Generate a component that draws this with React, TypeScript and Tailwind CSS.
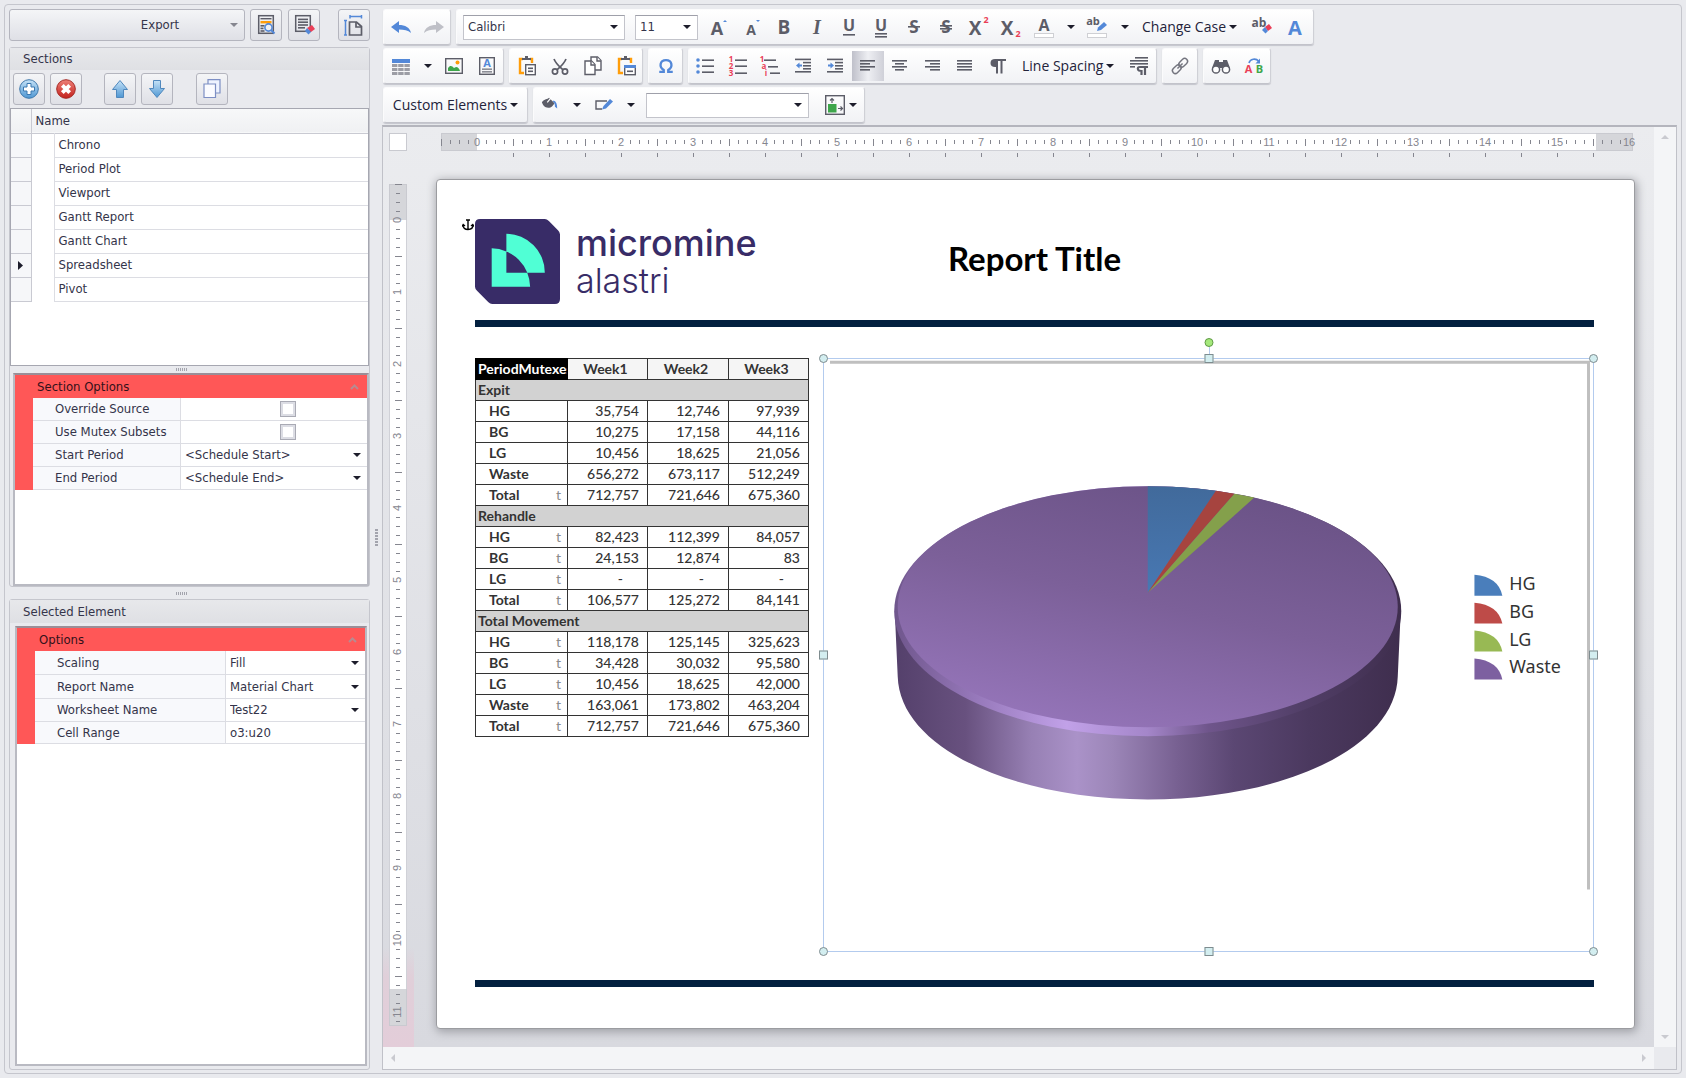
import type { ReactNode } from 'react';

const DARK = '#5c5d68';
const BLUE = '#5388d8';
const RED = '#ea3f58';
const ORANGE = '#ff9d0a';
const GREEN = '#3ea64b';

const sections = ['Chrono', 'Period Plot', 'Viewport', 'Gantt Report', 'Gantt Chart', 'Spreadsheet', 'Pivot'];

type Row = { label: string; unit?: string; values?: string[] };

const reportRows: Row[] = [
    { label: 'Expit' },
    { label: 'HG', values: ['35,754', '12,746', '97,939'] },
    { label: 'BG', values: ['10,275', '17,158', '44,116'] },
    { label: 'LG', values: ['10,456', '18,625', '21,056'] },
    { label: 'Waste', values: ['656,272', '673,117', '512,249'] },
    { label: 'Total', unit: 't', values: ['712,757', '721,646', '675,360'] },
    { label: 'Rehandle' },
    { label: 'HG', unit: 't', values: ['82,423', '112,399', '84,057'] },
    { label: 'BG', unit: 't', values: ['24,153', '12,874', '83'] },
    { label: 'LG', unit: 't', values: ['-', '-', '-'] },
    { label: 'Total', unit: 't', values: ['106,577', '125,272', '84,141'] },
    { label: 'Total Movement' },
    { label: 'HG', unit: 't', values: ['118,178', '125,145', '325,623'] },
    { label: 'BG', unit: 't', values: ['34,428', '30,032', '95,580'] },
    { label: 'LG', unit: 't', values: ['10,456', '18,625', '42,000'] },
    { label: 'Waste', unit: 't', values: ['163,061', '173,802', '463,204'] },
    { label: 'Total', unit: 't', values: ['712,757', '721,646', '675,360'] },
];

function Svg({ children, size = 20 }: { children: ReactNode; size?: number }) {
    return (
        <svg width={size} height={size} viewBox="0 0 20 20" fill="none" className="shrink-0 overflow-visible" aria-hidden="true">
            {children}
        </svg>
    );
}

function Lines({ rows, color = DARK }: { rows: [number, number, number][]; color?: string }) {
    return (
        <>
            {rows.map(([x, y, w], i) => (
                <rect key={i} x={x} y={y} width={w} height="1.6" fill={color} />
            ))}
        </>
    );
}

function Glyph({ x = 10, y = 16, size = 18, color = DARK, bold = true, italic = false, serif = false, children }: any) {
    return (
        <text
            x={x}
            y={y}
            fontSize={size}
            fill={color}
            textAnchor="middle"
            fontWeight={bold ? 700 : 400}
            fontStyle={italic ? 'italic' : 'normal'}
            fontFamily={serif ? 'Liberation Serif, serif' : 'Open Sans, sans-serif'}
        >
            {children}
        </text>
    );
}

function Caret({ className = 'fill-[#1d1d2b]' }: { className?: string }) {
    return (
        <svg width="8" height="4" viewBox="0 0 8 4" className={`shrink-0 ${className}`} aria-hidden="true">
            <path d="M0 0H8L4 4Z" />
        </svg>
    );
}

const icons = {
    undo: <path d="M0 10L8 4V8C14 8 19 10.5 20 16C17 13.2 13 12.5 8 12.5V16Z" fill={BLUE} />,
    redo: <path d="M20 10L12 4V8C6 8 1 10.5 0 16C3 13.2 7 12.5 12 12.5V16Z" fill="#bfc0c7" />,
    grow: <><Glyph x={8} y={18} size={18}>A</Glyph><path d="M14 5L16 3L18 5Z" fill={BLUE} /></>,
    shrink: <><Glyph x={9} y={18} size={14}>A</Glyph><path d="M14 3L16 5L18 3Z" fill={BLUE} /></>,
    bold: <Glyph y={17} size={19}>B</Glyph>,
    italic: <Glyph y={17} size={20} serif italic>I</Glyph>,
    underline: <><Glyph y={14} size={16}>U</Glyph><Lines rows={[[4, 17, 12]]} /></>,
    underline2: <><Glyph y={14} size={16}>U</Glyph><Lines rows={[[4, 16, 12], [4, 19, 12]]} /></>,
    strike: <><Glyph y={16} size={17}>S</Glyph><Lines rows={[[4, 9, 12]]} /></>,
    strike2: <><Glyph y={16} size={17}>S</Glyph><Lines rows={[[4, 8, 12], [4, 11, 12]]} /></>,
    sup: <><Glyph x={6} y={18} size={19}>X</Glyph><Glyph x={17} y={6} size={9} color={RED}>2</Glyph></>,
    sub: <><Glyph x={6} y={18} size={19}>X</Glyph><Glyph x={17} y={20} size={9} color={RED}>2</Glyph></>,
    fontColor: <><Glyph y={14} size={16}>A</Glyph><rect x=".5" y="16.5" width="19" height="4" stroke="#cfd0d4" fill="#fff" /></>,
    highlight: (
        <>
            <Glyph x={6} y={8} size={11}>ab</Glyph>
            <rect x=".5" y="16.5" width="19" height="4" stroke="#cfd0d4" fill="#fff" />
            <path d="M10 14L11 10.5L17 5L20 8L14 13Z" fill={BLUE} />
        </>
    ),
    clearFormat: (
        <>
            <Glyph x={7} y={10} size={12}>ab</Glyph>
            <path d="M13 10L17 7L20 11L16 14Z" fill={RED} />
            <path d="M13 10L16 14L13.5 16.5L10 13Z" fill={BLUE} />
        </>
    ),
    fontDialog: <Glyph y={18} size={20} color={BLUE}>A</Glyph>,
    table: (
        <>
            <rect x="1" y="3" width="18" height="4" fill={BLUE} />
            {[8, 12, 16].map((y) => [1, 7.2, 13.4].map((x) => <rect key={`${x}-${y}`} x={x} y={y} width="5.4" height="3" fill="#9c9da5" />))}
        </>
    ),
    picture: (
        <>
            <rect x="1.7" y="2.7" width="16.6" height="14.6" stroke={DARK} strokeWidth="1.4" />
            <path d="M4 15V12C6 9 8 9.5 10 12L12 11C14 11 15.5 13 16 15Z" fill={GREEN} />
            <circle cx="13.5" cy="6.5" r="2" fill={ORANGE} />
        </>
    ),
    textBox: (
        <>
            <rect x="2.7" y="1.7" width="14.6" height="16.6" stroke={DARK} strokeWidth="1.4" />
            <Glyph y={11} size={11} color={BLUE}>A</Glyph>
            <Lines rows={[[5, 12.4, 10], [5, 15, 10]]} color="#8c8d96" />
        </>
    ),
    paste: (
        <>
            <path d="M6 3H3V17H7M13 3H15V7" stroke={ORANGE} strokeWidth="2.4" />
            <path d="M5 4V2H8V0H11V2H14V4Z" fill={DARK} />
            <rect x="8.7" y="8.7" width="9.6" height="10" stroke={DARK} strokeWidth="1.4" fill="#fff" />
            <Lines rows={[[11, 11.5, 5], [11, 14.5, 5]]} />
        </>
    ),
    pasteSpecial: (
        <>
            <path d="M6 3H3V17H7M13 3H15V7" stroke={ORANGE} strokeWidth="2.4" />
            <path d="M5 4V2H8V0H11V2H14V4Z" fill={DARK} />
            <rect x="8.7" y="9.7" width="10.6" height="9" stroke={DARK} strokeWidth="1.4" fill="#fff" />
            <rect x="8" y="9" width="12" height="3" fill={BLUE} />
            <Lines rows={[[11, 14.5, 6]]} />
        </>
    ),
    cut: (
        <g stroke={DARK} strokeWidth="1.7">
            <path d="M4 3C6 8 10 11 13 14M16 3C14 8 10 11 7 14" />
            <circle cx="5" cy="15.5" r="2.6" />
            <circle cx="15" cy="15.5" r="2.6" />
        </g>
    ),
    copy: (
        <g stroke={DARK} strokeWidth="1.4" fill="#fff">
            <path d="M8 1H14.5L18 4.5V14H8Z" />
            <path d="M14 1V5H18" />
            <path d="M2 5H8.5L12 8.5V18.5H2Z" />
            <path d="M8 5V9H12" />
        </g>
    ),
    omega: <path d="M2.5 16.5H7.5V14.5C2 11 3 3.5 10 3.5S18 11 12.5 14.5V16.5H17.5" stroke={BLUE} strokeWidth="2.6" />,
    bullets: (
        <>
            {[4, 10, 16].map((y) => <circle key={y} cx="3" cy={y} r="1.8" fill={BLUE} />)}
            <Lines rows={[[7, 3.4, 12], [7, 9.4, 12], [7, 15.4, 12]]} />
        </>
    ),
    numbers: (
        <>
            <Glyph x={3} y={6} size={8} color={RED}>1</Glyph>
            <Glyph x={3} y={13} size={8} color={RED}>2</Glyph>
            <Glyph x={3} y={20} size={8} color={RED}>3</Glyph>
            <Lines rows={[[7, 3.4, 12], [7, 9.4, 12], [7, 16.4, 12]]} />
        </>
    ),
    multilevel: (
        <>
            <Glyph x={2} y={6} size={8} color={RED}>1</Glyph>
            <Glyph x={4} y={13} size={8} color={RED}>a</Glyph>
            <Glyph x={6} y={20} size={8} color={RED}>i</Glyph>
            <Lines rows={[[4, 3.4, 12], [8, 10, 10], [10, 16.4, 10]]} />
        </>
    ),
    outdent: (
        <>
            <Lines rows={[[2, 2.6, 16], [10, 5.8, 8], [10, 9, 8], [10, 12, 8], [2, 15, 16]]} />
            <path d="M3 9.5L6.5 6.5V8.5H9V10.5H6.5V12.5Z" fill={BLUE} />
        </>
    ),
    indent: (
        <>
            <Lines rows={[[2, 2.6, 16], [10, 5.8, 8], [10, 9, 8], [10, 12, 8], [2, 15, 16]]} />
            <path d="M9 9.5L5.5 6.5V8.5H3V10.5H5.5V12.5Z" fill={BLUE} />
        </>
    ),
    left: <Lines rows={[[2, 4, 15], [2, 7, 10], [2, 10, 15], [2, 13, 10]]} />,
    center: <Lines rows={[[2, 4, 15], [5, 7, 9], [2, 10, 15], [5, 13, 9]]} />,
    right: <Lines rows={[[2, 4, 15], [7, 7, 10], [2, 10, 15], [7, 13, 10]]} />,
    justify: <Lines rows={[[2, 4, 15], [2, 7, 15], [2, 10, 15], [2, 13, 15]]} />,
    pilcrow: (
        <>
            <path d="M9 3H7C4 3 2.500 4.500 2.500 7C2.500 9.500 4 11 7 11H9Z" fill={DARK} />
            <path d="M18 4H7M9 4V17.500M13.500 4V17.500" stroke={DARK} strokeWidth="2" />
        </>
    ),
    paragraph: (
        <>
            <Lines rows={[[6, 1, 13], [1, 4, 18], [1, 7, 18], [1, 10, 5]]} />
            <path d="M19 11H11C9 11 8.500 12 9 13.500C9.500 15 11 15 12.500 15V19M16 11V19" stroke={DARK} strokeWidth="2.2" />
        </>
    ),
    link: (
        <g stroke="#74757f" strokeWidth="1.6" transform="rotate(-45 10 10)">
            <rect x="-.5" y="6.8" width="11" height="6.4" rx="3.2" />
            <rect x="9.5" y="6.8" width="11" height="6.4" rx="3.2" />
            <path d="M6 10H14" />
        </g>
    ),
    find: (
        <>
            <path d="M4 4H8V6H12V4H16L19 12H1Z" fill={DARK} />
            <circle cx="5" cy="13.5" r="3.6" stroke={DARK} strokeWidth="1.5" fill="#fff" />
            <circle cx="15" cy="13.5" r="3.6" stroke={DARK} strokeWidth="1.5" fill="#fff" />
        </>
    ),
    replace: (
        <>
            <Glyph x={4.5} y={17} size={11} color={RED}>A</Glyph>
            <Glyph x={15.5} y={17} size={11} color={GREEN}>B</Glyph>
            <path d="M5 7C6 2.5 12 2 14.5 5" stroke={BLUE} strokeWidth="1.6" />
            <path d="M16 2.5V7.5H11.5Z" fill={BLUE} />
        </>
    ),
    fill: (
        <>
            <path d="M1 7C4 3 7 4 9 2L15 8C13 11 12 13 8 13C4 13 2 10 1 7Z" fill={DARK} />
            <path d="M7 7L12 1" stroke="#fff" strokeWidth="1.4" />
            <path d="M14 5C17 6 18 9 18 14L15.5 12C15.5 9 15 7 13 6Z" fill={BLUE} />
        </>
    ),
    pen: (
        <>
            <path d="M13 6H2V14H8" stroke={DARK} strokeWidth="1.4" />
            <path d="M8 14.5L9.5 11L16 4L19 6.5L12 13.5Z" fill={BLUE} />
        </>
    ),
    wrap: (
        <>
            <rect x=".7" y=".7" width="18.6" height="18.6" stroke={DARK} strokeWidth="1.4" />
            <rect x="3" y="9" width="8.5" height="8.5" fill={GREEN} />
            <path d="M7 8V4M5 5.5L7 3.5L9 5.5M13 13.5H17M15.5 11.5L17.5 13.5L15.5 15.5" stroke={DARK} strokeWidth="1.2" />
        </>
    ),
    preview: (
        <>
            <rect x="2.7" y=".7" width="14.6" height="17.6" stroke={DARK} strokeWidth="1.5" />
            <rect x="4.5" y="3" width="11" height="1.4" fill={DARK} />
            <rect x="4.5" y="6" width="11" height="2.4" fill={ORANGE} />
            <Lines rows={[[4.5, 10, 4], [4.5, 12.6, 3], [4.5, 15.2, 4]]} />
            <circle cx="12.5" cy="12.5" r="3.6" stroke={BLUE} strokeWidth="1.6" fill="#eef0f5" />
            <path d="M15 15L18.5 18.5" stroke={BLUE} strokeWidth="2" />
        </>
    ),
    clearPage: (
        <>
            <rect x="1.7" y=".7" width="14.6" height="15.6" stroke={DARK} strokeWidth="1.5" />
            <Lines rows={[[4, 3.6, 10], [4, 6.4, 10], [4, 9.2, 10], [4, 12, 7]]} />
            <path d="M13 13L18 10L21 14L17 17Z" fill={RED} />
            <path d="M13 13L17 17L14.5 19.5L11 16Z" fill={BLUE} />
        </>
    ),
    pageSize: (
        <>
            <path d="M5.5 7H12.5L17.5 11.5V20H5.5Z" stroke={DARK} strokeWidth="1.7" />
            <path d="M12 7V12H17.5" stroke={DARK} strokeWidth="1.7" />
            <path d="M6 1.5H17.5M6 0V3.5M17.5 0V3.5M1.5 5.5V20M0 5.5H3M0 20H3" stroke={BLUE} strokeWidth="1.5" />
        </>
    ),
    add: (
        <>
            <circle cx="10" cy="10" r="9.3" fill="url(#blueBall)" stroke="#3f78ab" />
            <path d="M8 4.5H12V8H15.5V12H12V15.5H8V12H4.5V8H8Z" fill="#fff" stroke="#3b78b0" />
        </>
    ),
    remove: (
        <>
            <circle cx="10" cy="10" r="9.3" fill="url(#redBall)" stroke="#a52a25" />
            <path d="M6.3 6.3L13.700 13.700M13.700 6.3L6.3 13.700" stroke="#fff" strokeWidth="3.8" />
        </>
    ),
    up: <path d="M10 1.5L17.5 10.5H13.5V18.5H6.5V10.5H2.5Z" fill="url(#blueBall)" stroke="#5088bd" />,
    down: <path d="M10 18.5L17.5 9.5H13.5V1.5H6.5V9.5H2.5Z" fill="url(#blueBall)" stroke="#5088bd" />,
    duplicate: (
        <g fill="#eef3ff" stroke="#7d8fc4" strokeWidth="1.2">
            <path d="M6 .6H18V14H6Z" />
            <path d="M2 5H13.5V18.5H2Z" fill="#fafbff" />
        </g>
    ),
};

type IconName = keyof typeof icons;

function SideButton({ icon, label }: { icon: IconName; label: string }) {
    return (
        <button aria-label={label} className="flex size-8 items-center justify-center rounded-[3px] border border-[#b4b5be] bg-linear-to-b from-[#f4f5f7] to-[#dfe0e6]">
            <Svg>{icons[icon]}</Svg>
        </button>
    );
}

function Tool({ icon, label, active = false, size }: { icon: IconName; label: string; active?: boolean; size?: number }) {
    return (
        <button aria-label={label} className={`flex h-[30px] flex-1 items-center justify-center ${active ? 'bg-linear-to-r from-[#bfc0ca] via-[#eeeff3] to-[#cfd0d8]' : ''}`}>
            <Svg size={size}>{icons[icon]}</Svg>
        </button>
    );
}

function DropButton({ label, className }: { label: string; className: string }) {
    return (
        <button aria-label={label} className={`flex h-[30px] items-center justify-center ${className}`}>
            <Caret />
        </button>
    );
}

function Group({ children, className = '' }: { children: ReactNode; className?: string }) {
    return (
        <div className={`flex h-9 items-center rounded-[3px] border border-[#fbfbfc] border-b-[#c2c3ca] border-r-[#cfd0d6] bg-linear-to-b from-white to-[#f1f2f5] shadow-[0_1px_1px_#c4c5cc] ${className}`}>
            {children}
        </div>
    );
}

function Combo({ label, value, className }: { label: string; value: string; className: string }) {
    return (
        <div className={`relative flex h-[25px] items-center border border-[#c3c4cb] border-t-[#9fa0aa] bg-white ${className}`}>
            <select aria-label={label} className="h-full w-full appearance-none pl-1 font-['DejaVu_Sans_Condensed','Noto_Sans',sans-serif] text-[13px] outline-none">
                <option>{value}</option>
            </select>
            <span className="pointer-events-none absolute right-[6px]"><Caret /></span>
        </div>
    );
}

function Grip({ vertical = false }: { vertical?: boolean }) {
    return (
        <span className={`flex gap-px ${vertical ? 'flex-col' : ''}`}>
            {[0, 1, 2, 3, 4, 5].map((i) => <span key={i} className={`bg-[#a3a4ad] ${vertical ? 'h-[2px] w-[3px]' : 'h-[3px] w-px'}`} />)}
        </span>
    );
}

function PropertyGroup({ title, grid, children }: { title: string; grid: string; children: ReactNode }) {
    return (
        <div className="bg-[#ff5757]">
            <div className="flex h-[23px] items-center justify-between pl-[22px] pr-2 text-[#33111a]">
                <span>{title}</span>
                <svg width="9" height="6" viewBox="0 0 9 6" fill="none" aria-hidden="true"><path d="M1 5L4.5 1.5L8 5" stroke="#b98a90" strokeWidth="2" /></svg>
            </div>
            <div className={`ml-[18px] grid ${grid}`}>{children}</div>
        </div>
    );
}

function Property({ id, label, children }: { id: string; label: string; children: ReactNode }) {
    return (
        <>
            <label htmlFor={id} className="flex h-full items-center border-b border-r border-[#dcdde3] bg-[#f8f9fc] pl-[22px]">{label}</label>
            <div className="relative flex h-full items-center border-b border-[#dcdde3] bg-white">{children}</div>
        </>
    );
}

function PropertySelect({ id, value }: { id: string; value: string }) {
    return (
        <>
            <select id={id} className="h-full w-full appearance-none pl-1 outline-none">
                <option>{value}</option>
            </select>
            <span className="pointer-events-none absolute right-[6px]"><Caret /></span>
        </>
    );
}

function PropertyCheck({ id }: { id: string }) {
    return (
        <span className="flex w-full justify-center pl-7">
            <input id={id} type="checkbox" className="size-4 appearance-none border border-[#a9aab4] bg-white shadow-[inset_0_0_0_2px_#dcdde4]" />
        </span>
    );
}

function Sidebar() {
    return (
        <aside className="flex w-[361px] shrink-0 flex-col pt-1">
            <div className="flex items-center">
                <button className="relative mr-[5px] flex h-8 flex-1 items-center justify-center rounded-[3px] border border-[#b4b5be] bg-linear-to-b from-[#f4f5f7] to-[#dfe0e6] pl-[66px]">
                    Export
                    <span className="absolute right-[6px]"><Caret className="fill-[#85868f]" /></span>
                </button>
                <div className="flex gap-[6px]">
                    <SideButton icon="preview" label="Preview" />
                    <SideButton icon="clearPage" label="Clear page" />
                </div>
                <span className="ml-[18px]"><SideButton icon="pageSize" label="Page size" /></span>
            </div>

            {/* Sections */}
            <section className="mt-[6px] flex flex-col rounded-[3px] border border-[#c5c6cd]">
                <h2 className="flex h-[22px] items-center bg-linear-to-b from-[#e7e8eb] to-[#dfe0e4] pl-[13px]">Sections</h2>
                <div className="flex items-center px-[3px] py-[3px]">
                    <div className="flex gap-[5px]">
                        <SideButton icon="add" label="Add section" />
                        <SideButton icon="remove" label="Remove section" />
                    </div>
                    <div className="ml-[22px] flex gap-[5px]">
                        <SideButton icon="up" label="Move up" />
                        <SideButton icon="down" label="Move down" />
                    </div>
                    <span className="ml-[23px]"><SideButton icon="duplicate" label="Duplicate" /></span>
                </div>
                <div className="h-[258px] border border-[#a6a7b1] bg-white">
                    <table className="w-full border-collapse text-left">
                        <thead>
                            <tr className="h-6 border-b border-[#c9cad2] bg-linear-to-b from-[#f7f8f9] to-[#f0f1f3]">
                                <th className="w-5 border-r border-[#c9cad2]" />
                                <th colSpan={2} className="pl-1 font-normal">Name</th>
                            </tr>
                        </thead>
                        <tbody>
                            {sections.map((name) => (
                                <tr key={name} className="h-6">
                                    <td className="w-5 border-b border-r border-[#c9cad2] bg-[#f6f7f9]">
                                        {name === 'Spreadsheet' && (
                                            <svg width="5" height="9" viewBox="0 0 5 9" className="mx-auto" aria-hidden="true"><path d="M0 0L5 4.5L0 9Z" fill="#1d1d2b" /></svg>
                                        )}
                                    </td>
                                    <td className="w-[23px] border-r border-[#dcdde3]" />
                                    <td className="border-b border-[#dcdde3] pl-1">{name}</td>
                                </tr>
                            ))}
                        </tbody>
                    </table>
                </div>
                <div className="flex h-[7px] items-center justify-center pr-4"><Grip /></div>
                <div className="ml-[3px] h-[213px] border-2 border-[#b9bac2] border-t-[#9a8e97] bg-white">
                    <PropertyGroup title="Section Options" grid="grid-cols-[148px_1fr] auto-rows-[23px]">
                        <Property id="override" label="Override Source"><PropertyCheck id="override" /></Property>
                        <Property id="mutex" label="Use Mutex Subsets"><PropertyCheck id="mutex" /></Property>
                        <Property id="start" label="Start Period"><PropertySelect id="start" value="<Schedule Start>" /></Property>
                        <Property id="end" label="End Period"><PropertySelect id="end" value="<Schedule End>" /></Property>
                    </PropertyGroup>
                </div>
            </section>
            <div className="flex h-3 items-center justify-center pr-4"><Grip /></div>

            {/* Selected element */}
            <section className="flex flex-1 flex-col rounded-[3px] border border-[#c5c6cd]">
                <h2 className="flex h-[23px] items-center bg-linear-to-b from-[#e7e8eb] to-[#dfe0e4] pl-[13px]">Selected Element</h2>
                <div className="mb-[3px] ml-[5px] mr-[2px] mt-[3px] flex-1 border-2 border-[#b9bac2] border-t-[#9a8e97] bg-white">
                    <PropertyGroup title="Options" grid="grid-cols-[191px_1fr] grid-rows-[24px_24px_23px_22px]">
                        <Property id="scaling" label="Scaling"><PropertySelect id="scaling" value="Fill" /></Property>
                        <Property id="report" label="Report Name"><PropertySelect id="report" value="Material Chart" /></Property>
                        <Property id="worksheet" label="Worksheet Name"><PropertySelect id="worksheet" value="Test22" /></Property>
                        <Property id="range" label="Cell Range">
                            <input id="range" defaultValue="o3:u20" className="h-full w-full pl-1 outline-none" />
                        </Property>
                    </PropertyGroup>
                </div>
            </section>
        </aside>
    );
}

function Toolbars() {
    return (
        <div className="flex flex-col gap-[3px] pl-px pt-1 font-['Open_Sans',sans-serif] text-[14px]">
            <div className="flex gap-[5px]">
                <Group className="w-[68px]">
                    <Tool icon="undo" label="Undo" />
                    <Tool icon="redo" label="Redo" />
                </Group>
                <Group className="pl-[6px] pr-[2px]">
                    <Combo label="Font" value="Calibri" className="w-[162px]" />
                    <Combo label="Font size" value="11" className="ml-[10px] w-[63px]" />
                    <div className="ml-[5px] flex w-[357px]">
                        <Tool icon="grow" label="Grow font" />
                        <Tool icon="shrink" label="Shrink font" />
                        <Tool icon="bold" label="Bold" />
                        <Tool icon="italic" label="Italic" />
                        <Tool icon="underline" label="Underline" />
                        <Tool icon="underline2" label="Double underline" />
                        <Tool icon="strike" label="Strikethrough" />
                        <Tool icon="strike2" label="Double strikethrough" />
                        <Tool icon="sup" label="Superscript" />
                        <Tool icon="sub" label="Subscript" />
                        <Tool icon="fontColor" label="Font color" />
                    </div>
                    <DropButton label="Font color options" className="w-[22px]" />
                    <div className="flex w-[30px]"><Tool icon="highlight" label="Highlight" /></div>
                    <DropButton label="Highlight options" className="w-[26px]" />
                    <button className="flex h-[30px] items-center gap-[3px] px-1 text-[#23233a]">Change Case <Caret /></button>
                    <div className="ml-1 flex w-[66px]">
                        <Tool icon="clearFormat" label="Clear formatting" />
                        <Tool icon="fontDialog" label="Font" />
                    </div>
                </Group>
            </div>
            <div className="flex gap-[5px]">
                <Group className="w-[121px]">
                    <div className="flex w-[33px]"><Tool icon="table" label="Table" /></div>
                    <DropButton label="Table options" className="w-[21px]" />
                    <Tool icon="picture" label="Picture" />
                    <Tool icon="textBox" label="Text box" />
                </Group>
                <Group className="w-[134px]">
                    <Tool icon="paste" label="Paste" />
                    <Tool icon="cut" label="Cut" />
                    <Tool icon="copy" label="Copy" />
                    <Tool icon="pasteSpecial" label="Paste special" />
                </Group>
                <Group className="w-[35px]"><Tool icon="omega" label="Symbol" size={18} /></Group>
                <Group>
                    <div className="flex w-[325px]">
                        <Tool icon="bullets" label="Bullets" />
                        <Tool icon="numbers" label="Numbering" />
                        <Tool icon="multilevel" label="Multilevel list" />
                        <Tool icon="outdent" label="Decrease indent" />
                        <Tool icon="indent" label="Increase indent" />
                        <Tool icon="left" label="Align left" active />
                        <Tool icon="center" label="Center" />
                        <Tool icon="right" label="Align right" />
                        <Tool icon="justify" label="Justify" />
                        <Tool icon="pilcrow" label="Show marks" />
                    </div>
                    <button className="flex h-[30px] items-center gap-[3px] pl-2 pr-1 text-[#23233a]">Line Spacing <Caret /></button>
                    <div className="ml-1 flex w-[34px]"><Tool icon="paragraph" label="Paragraph" /></div>
                </Group>
                <Group className="w-[36px]"><Tool icon="link" label="Hyperlink" size={18} /></Group>
                <Group className="w-[68px]">
                    <Tool icon="find" label="Find" />
                    <Tool icon="replace" label="Replace" />
                </Group>
            </div>
            <div className="flex gap-[5px]">
                <Group className="w-[145px]">
                    <button className="flex h-[30px] flex-1 items-center justify-center gap-[3px] text-[#23233a]">Custom Elements <Caret /></button>
                </Group>
                <Group className="w-[332px]">
                    <div className="flex w-8"><Tool icon="fill" label="Fill" size={18} /></div>
                    <DropButton label="Fill options" className="w-[22px]" />
                    <div className="flex w-8"><Tool icon="pen" label="Outline" /></div>
                    <DropButton label="Outline options" className="w-[22px]" />
                    <Combo label="Outline width" value="" className="ml-1 w-[163px]" />
                    <button aria-label="Wrap text" className="ml-4 flex h-[30px] items-center gap-1">
                        <Svg>{icons.wrap}</Svg>
                        <Caret />
                    </button>
                </Group>
            </div>
        </div>
    );
}

const steps = (from: number, to: number) => Array.from({ length: to - from + 1 }, (_, i) => from + i);

function HorizontalRuler() {
    return (
        <div className="relative ml-[5px] mr-[2px] flex h-[18px]">
            <div className="w-9 border border-r-0 border-[#c9cad0] bg-[#d5d6da]" />
            <div className="flex-1 border-y border-[#d0d1d7] bg-white" />
            <div className="w-[37px] border border-l-0 border-[#c9cad0] bg-[#d5d6da]" />
            <svg className="absolute inset-0 h-6 w-full overflow-visible" aria-hidden="true">
                {steps(-4, 128).map((i) => {
                    const x = 36 + i * 9;
                    if (i % 8 === 0 && i >= 0) {
                        return <text key={i} x={x} y="13" textAnchor="middle" fontSize="11" fill="#85868f" fontFamily="Liberation Sans, sans-serif">{i / 8}</text>;
                    }
                    const tall = i % 4 === 0;
                    return <rect key={i} x={x} y={tall ? 6 : 7} width="1" height={tall ? 7 : 4} fill="#85868f" />;
                })}
                {steps(1, 31).map((i) => <rect key={i} x={36 + i * 36} y="20" width="1" height="4" fill="#85868f" />)}
            </svg>
        </div>
    );
}

function VerticalRuler() {
    return (
        <div className="relative mt-[33px] flex flex-1 flex-col">
            <div className="h-9 border border-b-0 border-[#c9cad0] bg-[#d5d6da]" />
            <div className="flex-1 border-x border-[#d0d1d7] bg-white" />
            <div className="h-[37px] border border-t-0 border-[#c9cad0] bg-[#d5d6da]" />
            <svg className="absolute inset-0 h-full w-full" aria-hidden="true">
                {steps(-4, 89).map((i) => {
                    const y = 36 + i * 9;
                    if (i % 8 === 0 && i >= 0) {
                        return <text key={i} transform={`translate(12 ${y}) rotate(-90)`} textAnchor="middle" fontSize="11" fill="#85868f" fontFamily="Liberation Sans, sans-serif">{i / 8}</text>;
                    }
                    const tall = i % 4 === 0;
                    return <rect key={i} x={tall ? 6 : 7} y={y} width={tall ? 7 : 4} height="1" fill="#85868f" />;
                })}
            </svg>
        </div>
    );
}

function Logo() {
    return (
        <div className="flex items-start">
            <svg width="85" height="85" viewBox="0 0 84 84" aria-hidden="true">
                <path d="M5 0H69Q71 0 73 2L82 11Q84 13 84 15V79Q84 84 79 84H17Q15 84 13 82L2 71Q0 69 0 67V5Q0 0 5 0Z" fill="#382c67" />
                <path fillRule="evenodd" d="M31 53V14.5A38.5 38.5 0 0 1 69 53ZM16.500 67V29A38.5 38.5 0 0 1 54.500 67Z" fill="#50ffd5" />
            </svg>
            <div className="ml-4 flex flex-col font-['Inter',sans-serif] text-[#382c67]">
                <span className="mt-1 text-[36px] font-medium leading-[40px]">micromine</span>
                <span className="text-[34px] font-light leading-[35px]">alastri</span>
            </div>
        </div>
    );
}

function ReportTable() {
    return (
        <table className="w-[334px] shrink-0 table-fixed self-start border-collapse border border-[#333] font-['Lato',sans-serif] text-[14px] leading-[18px] text-[#333]">
            <colgroup>
                <col className="w-[92px]" />
                <col className="w-[80px]" />
                <col className="w-[81px]" />
                <col className="w-[80px]" />
            </colgroup>
            <thead>
                <tr className="h-[21px] bg-[#f5f5f5]">
                    <th className="overflow-hidden whitespace-nowrap border border-black bg-black p-0 pl-[2px] text-left text-white">PeriodMutexes</th>
                    {['Week1', 'Week2', 'Week3'].map((w) => <th key={w} className="border border-[#333] p-0 pr-1">{w}</th>)}
                </tr>
            </thead>
            <tbody>
                {reportRows.map((row, i) => row.values ? (
                    <tr key={i} className="h-[21px]">
                        <th className="border border-[#333] p-0">
                            <div className="flex justify-between pl-[13px] pr-[6px]">
                                <span>{row.label}</span>
                                <span className="font-normal text-[#8a8a8a]">{row.unit}</span>
                            </div>
                        </th>
                        {row.values.map((v, j) => (
                            <td key={j} className={`border border-[#333] p-0 text-right font-medium ${v === '-' ? 'pr-6' : 'pr-2'}`}>{v}</td>
                        ))}
                    </tr>
                ) : (
                    <tr key={i} className="h-[21px] bg-[#d2d2d2]">
                        <th colSpan={4} className="border border-[#333] p-0 pl-[2px] text-left">{row.label}</th>
                    </tr>
                ))}
            </tbody>
        </table>
    );
}

const legend = [
    { name: 'HG', color: '#4a7ebb' },
    { name: 'BG', color: '#be4b48' },
    { name: 'LG', color: '#98b954' },
    { name: 'Waste', color: '#7d60a0' },
];

function PieChart() {
    return (
        <svg viewBox="0 0 772 593" className="h-full w-full" role="img" aria-label="Material chart">
            <defs>
                <linearGradient id="top" x1=".25" y1=".95" x2=".7" y2="0">
                    <stop offset="0" stopColor="#9474b8" />
                    <stop offset=".5" stopColor="#7c6099" />
                    <stop offset="1" stopColor="#6a5286" />
                </linearGradient>
                <linearGradient id="side">
                    <stop offset="0" stopColor="#54406b" />
                    <stop offset=".14" stopColor="#68517f" />
                    <stop offset=".27" stopColor="#9780b4" />
                    <stop offset=".36" stopColor="#aa92c8" />
                    <stop offset=".43" stopColor="#9c86b8" />
                    <stop offset=".56" stopColor="#776091" />
                    <stop offset=".67" stopColor="#5b4773" />
                    <stop offset=".82" stopColor="#4b395f" />
                    <stop offset="1" stopColor="#3f2e4e" />
                </linearGradient>
                <linearGradient id="bevel">
                    <stop offset="0" stopColor="#6f568c" />
                    <stop offset=".16" stopColor="#9678ba" />
                    <stop offset=".34" stopColor="#c1a1e8" />
                    <stop offset=".5" stopColor="#a486c9" />
                    <stop offset=".62" stopColor="#6f558b" />
                    <stop offset=".8" stopColor="#523f68" />
                    <stop offset="1" stopColor="#3f2e4e" />
                </linearGradient>
                <linearGradient id="blueSlice" x1="0" y1="0" x2="0" y2="1">
                    <stop offset="0" stopColor="#416a9b" />
                    <stop offset="1" stopColor="#4878b3" />
                </linearGradient>
            </defs>
            <path d="M6 2.5H767.5V532" fill="none" stroke="#bfbfbf" strokeWidth="3" />
            {/* side wall, bevel, top face */}
            <path d="M71 252L74 318C76 390 190 441.5 325 441.5S574 390 576 318L579 252Z" fill="url(#side)" />
            <ellipse cx="325" cy="252.500" rx="254.500" ry="125.500" fill="url(#bevel)" />
            <ellipse cx="325" cy="248" rx="251" ry="121" fill="url(#top)" />
            <path d="M325 234V127Q360 127 393.5 131.5Z" fill="url(#blueSlice)" />
            <path d="M325 234L393.5 131.5L412 134.5Z" fill="#a6443f" />
            <path d="M325 234L412 134.5L432 138.5Z" fill="#84a04b" />
            {legend.map((item, i) => (
                <g key={item.name}>
                    <path d={`M653 ${216 + i * 28}Q677 ${218 + i * 28} 681 ${237 + i * 28}H653Z`} fill={item.color} />
                    <text x="688" y={231 + i * 28} fontSize="18" fill="#333" fontFamily="Noto Sans, sans-serif">{item.name}</text>
                </g>
            ))}
        </svg>
    );
}

const handle = 'absolute size-[9px] border border-[#7f8c8f] bg-[#d3eef0]';

function SelectedFrame() {
    return (
        <div className="relative ml-[14px] flex-1 border border-[#b3cbee]">
            <div className="absolute inset-0"><PieChart /></div>
            <span className="absolute -top-3 left-1/2 h-3 w-px bg-[#b3cbee]" />
            <span className="absolute -top-[21px] left-1/2 size-[9px] -translate-x-1/2 rounded-full border border-[#5f9a45] bg-[#a5e87c]" />
            <span className={`${handle} -left-[5px] -top-[5px] rounded-full`} />
            <span className={`${handle} -right-[5px] -top-[5px] rounded-full`} />
            <span className={`${handle} -bottom-[5px] -left-[5px] rounded-full`} />
            <span className={`${handle} -bottom-[5px] -right-[5px] rounded-full`} />
            <span className={`${handle} -top-[5px] left-1/2 -translate-x-1/2`} />
            <span className={`${handle} -bottom-[5px] left-1/2 -translate-x-1/2`} />
            <span className={`${handle} -left-[5px] top-1/2 -translate-y-1/2`} />
            <span className={`${handle} -right-[5px] top-1/2 -translate-y-1/2`} />
        </div>
    );
}

function ReportPage() {
    return (
        <article className="relative mt-7 flex flex-1 flex-col rounded-[4px] border border-[#9b9ca0] bg-white pb-[41px] pl-[38px] pr-10 pt-[39px] shadow-[1px_2px_10px_1px_#9fa0a6]">
            <svg width="12" height="12" viewBox="0 0 12 12" fill="none" className="absolute left-[25px] top-[39px]" aria-hidden="true">
                <path d="M4 1H8M6 1V11M1 6C1 9 3 10.5 6 10.5S11 9 11 6M0 7.5L1.2 5.5L3 7M12 7.5L10.8 5.5L9 7" stroke="#000" strokeWidth="1.4" />
            </svg>
            <header className="grid grid-cols-[1fr_auto_1fr]">
                <Logo />
                <h1 className="pt-[19px] font-['Lato',sans-serif] text-[33px] font-bold leading-[40px] text-black">Report Title</h1>
            </header>
            <div className="mt-4 h-[7px] bg-[#03203f]" />
            <div className="mt-[31px] flex flex-1">
                <ReportTable />
                <SelectedFrame />
            </div>
            <div className="mt-[28px] h-[7px] bg-[#03203f]" />
        </article>
    );
}

function Editor() {
    return (
        <div className="mt-[2px] flex flex-1 flex-col border border-[#c0c1c8] border-t-2 border-t-[#b4b5bd]">
            <div className="flex flex-1 bg-linear-to-b from-[#ebecef] to-[#d8d9df]">
                <div className="flex w-[31px] shrink-0 flex-col bg-[linear-gradient(to_top,#e3cdd9_0,#e0cfd9_70px,transparent_100px)] pb-[21px] pl-[6px] pr-[7px] pt-[6px]">
                    <div className="h-[18px] border border-[#c9cad0] bg-white" />
                    <VerticalRuler />
                </div>
                <div className="flex flex-1 flex-col pb-[18px] pl-[22px] pr-[19px] pt-[6px]">
                    <HorizontalRuler />
                    <ReportPage />
                </div>
                <div className="flex w-[22px] shrink-0 flex-col items-center justify-between bg-[#f4f5f7] py-2">
                    <Caret className="rotate-180 fill-[#c9cad0]" />
                    <Caret className="fill-[#c9cad0]" />
                </div>
            </div>
            <div className="flex h-[22px]">
                <div className="flex flex-1 items-center justify-between bg-[#f4f5f7] px-[6px]">
                    <Caret className="rotate-90 fill-[#c9cad0]" />
                    <Caret className="-rotate-90 fill-[#c9cad0]" />
                </div>
                <div className="w-[22px]" />
            </div>
        </div>
    );
}

export default function App() {
    return (
        <div className="flex min-h-screen bg-[#e9eaee] p-1 font-['DejaVu_Sans_Condensed','Noto_Sans',sans-serif] text-[13px] leading-4 text-[#34344a]">
            <svg width="0" height="0" className="absolute" aria-hidden="true">
                <defs>
                    <linearGradient id="blueBall" x1="0" y1="0" x2="0" y2="1">
                        <stop offset="0" stopColor="#c5e2f7" />
                        <stop offset="1" stopColor="#4f97d3" />
                    </linearGradient>
                    <linearGradient id="redBall" x1="0" y1="0" x2="0" y2="1">
                        <stop offset="0" stopColor="#ee8078" />
                        <stop offset="1" stopColor="#c3221d" />
                    </linearGradient>
                </defs>
            </svg>
            <div className="flex flex-1 rounded-[4px] border border-[#c5c6cd] pb-[3px] pl-1 pr-[4px]">
                <Sidebar />
                <div className="flex w-3 shrink-0 items-center justify-center"><Grip vertical /></div>
                <main className="flex min-w-0 flex-1 flex-col">
                    <Toolbars />
                    <Editor />
                </main>
            </div>
        </div>
    );
}
